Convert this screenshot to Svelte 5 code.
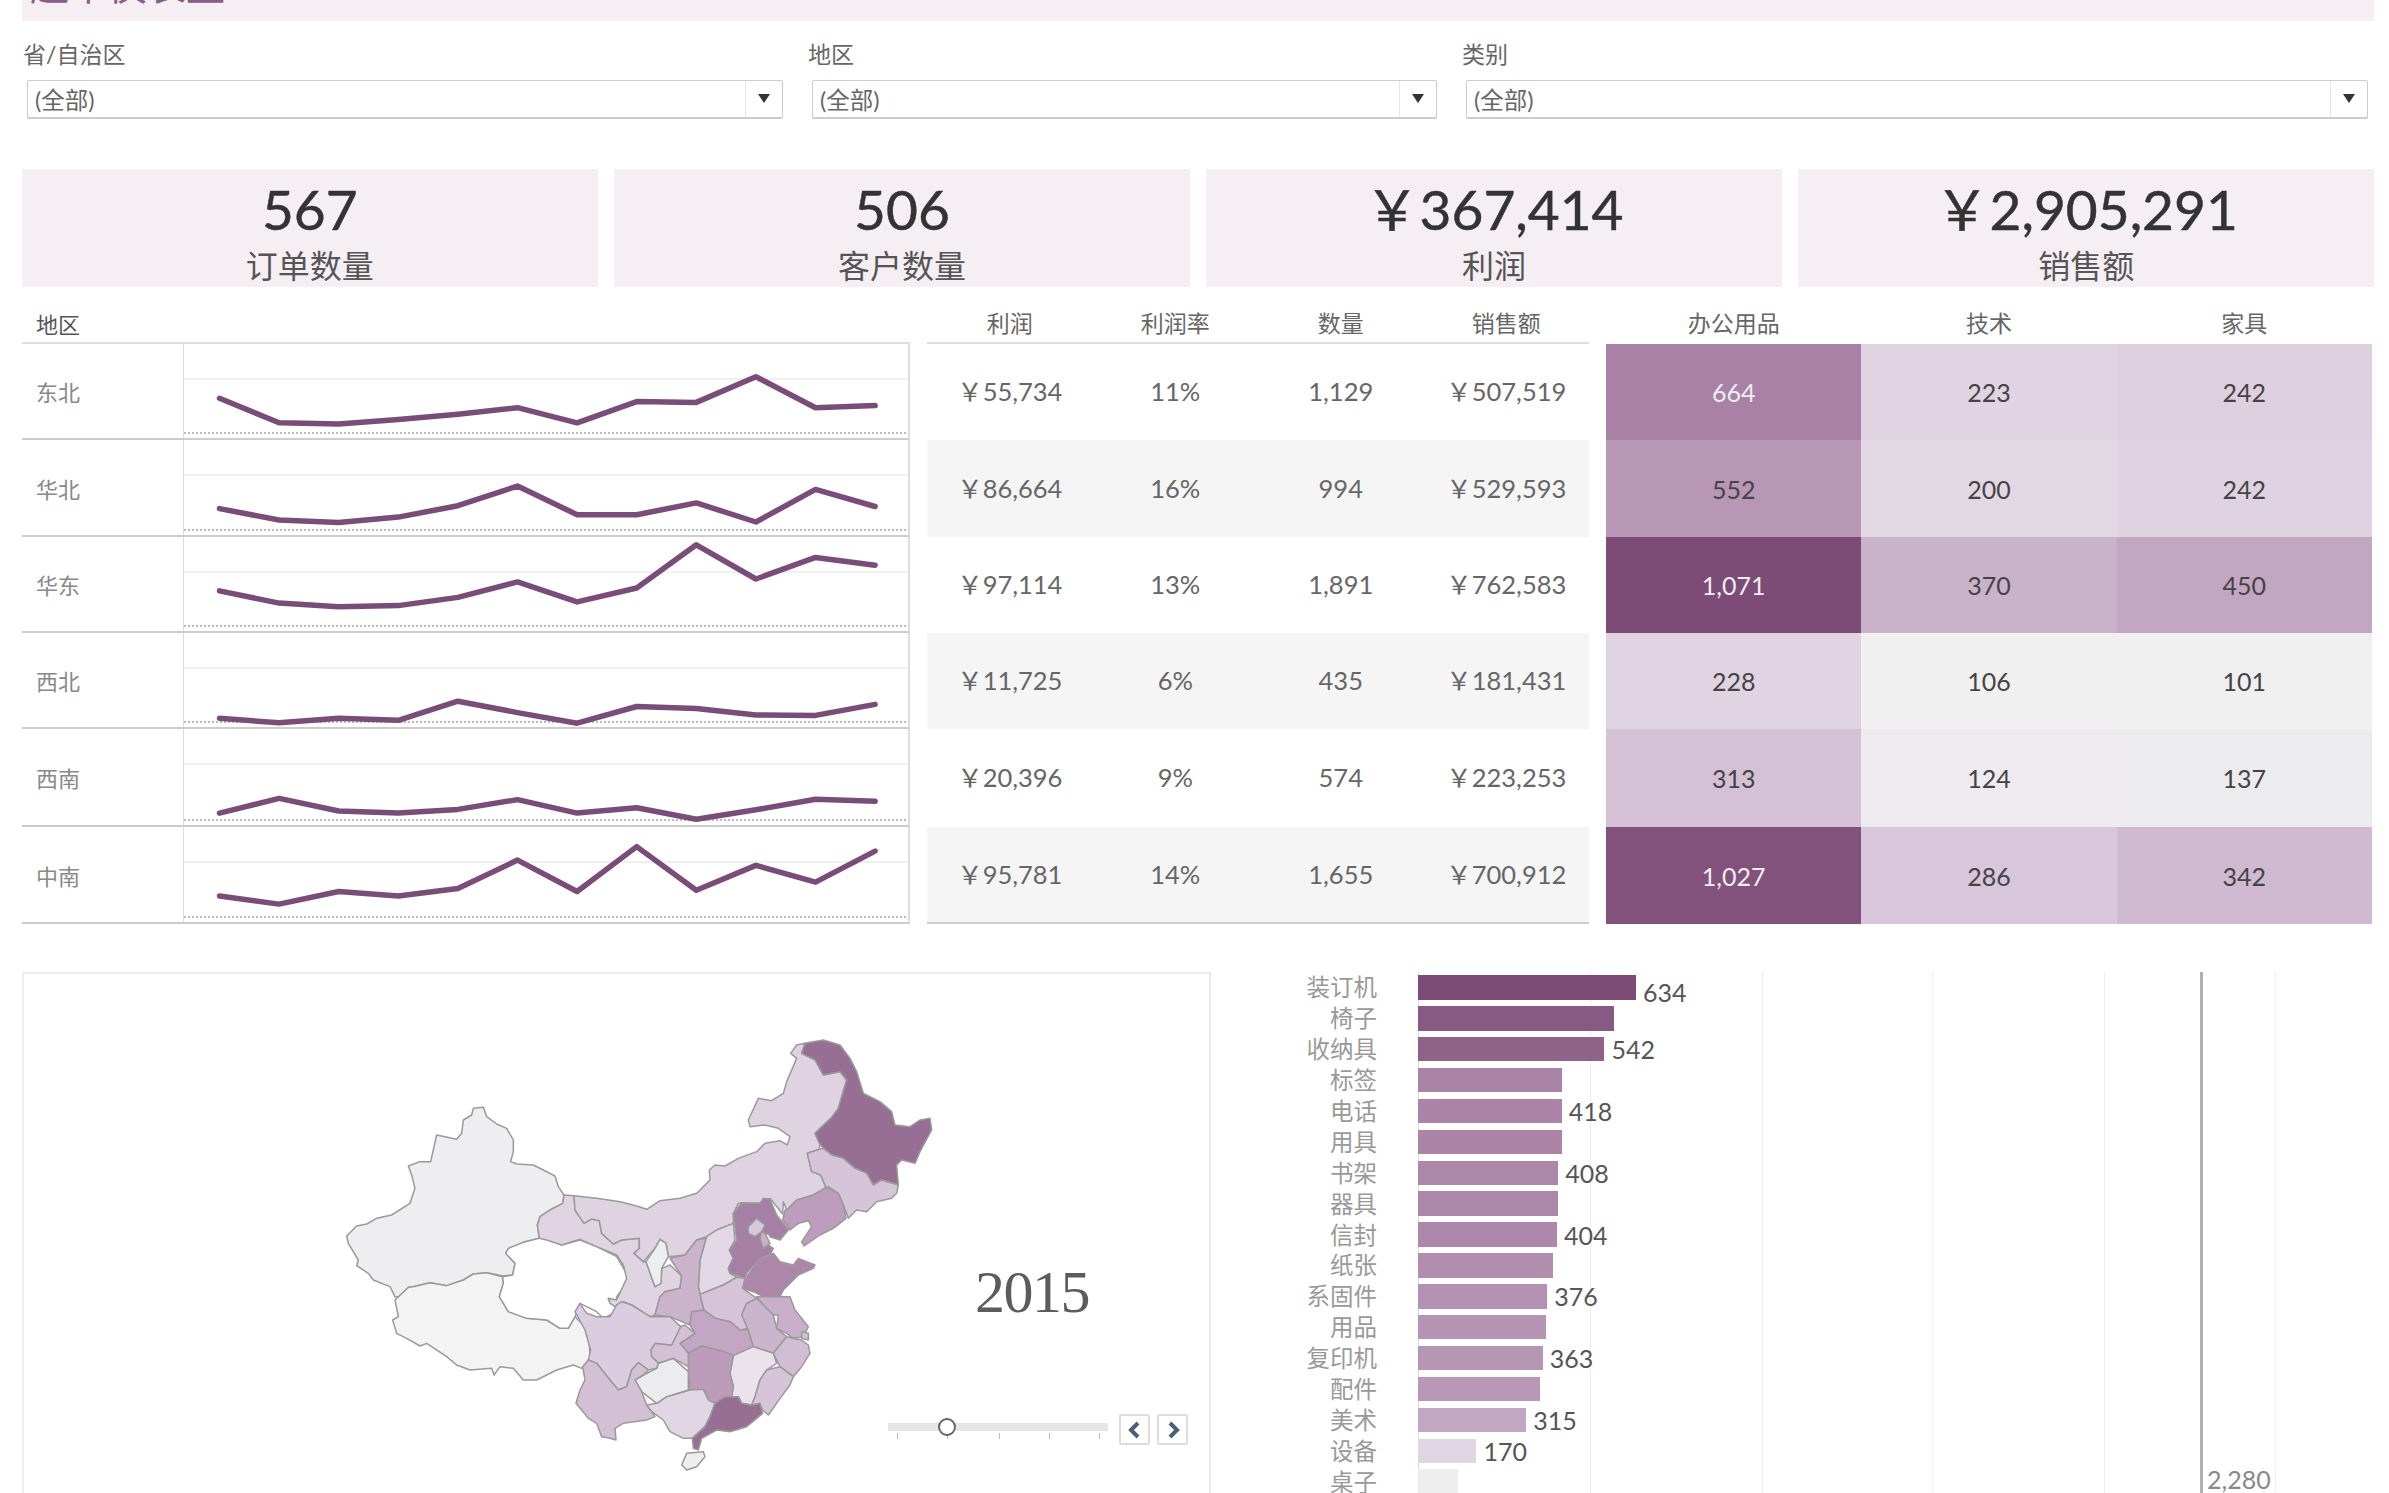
<script>
  const filters = [
    { label: '省/自治区', cls: 'f1' },
    { label: '地区', cls: 'f2' },
    { label: '类别', cls: 'f3' }
  ];

  const kpis = [
    { value: '567', label: '订单数量' },
    { value: '506', label: '客户数量' },
    { value: '￥367,414', label: '利润' },
    { value: '￥2,905,291', label: '销售额' }
  ];

  const rowHeights = [96, 97, 96, 96, 98, 97];

  // z = line height read off the reference crop, top = where that row starts in the same crop
  const regions = [
    { name: '东北', top: 107, z: [240, 300, 303, 292, 279, 263, 300, 248, 250, 187, 263, 258],
      cells: ['￥55,734', '11%', '1,129', '￥507,519'],
      heat: [[664, '#aa81a6', true], [223, '#e0d4e3'], [242, '#dfd0e0']] },
    { name: '华北', top: 342, z: [510, 538, 544, 531, 503, 455, 525, 525, 496, 543, 463, 505],
      cells: ['￥86,664', '16%', '994', '￥529,593'],
      heat: [[552, '#b896b6'], [200, '#e2d8e4'], [242, '#dfd2e1']] },
    { name: '华东', top: 581, z: [713, 743, 752, 749, 729, 691, 740, 706, 600, 684, 631, 650],
      cells: ['￥97,114', '13%', '1,891', '￥762,583'],
      heat: [['1,071', '#7c4c76', true], [370, '#cbb2cb'], [450, '#c2a6c2']] },
    { name: '西北', top: 816, z: [1025, 1036, 1025, 1030, 983, 1011, 1037, 996, 1001, 1017, 1018, 991],
      cells: ['￥11,725', '6%', '435', '￥181,431'],
      heat: [[228, '#e0d4e2'], [106, '#f0f0f0'], [101, '#f0f0f0']] },
    { name: '西南', top: 1052, z: [1258, 1222, 1253, 1258, 1249, 1225, 1258, 1245, 1273, 1250, 1224, 1229],
      cells: ['￥20,396', '9%', '574', '￥223,253'],
      heat: [[313, '#d4c1d6'], [124, '#eeeaef'], [137, '#ecebed']] },
    { name: '中南', top: 1292, z: [1461, 1481, 1450, 1461, 1443, 1373, 1450, 1340, 1447, 1386, 1427, 1351],
      cells: ['￥95,781', '14%', '1,655', '￥700,912'],
      heat: [['1,027', '#82527d', true], [286, '#d8c6da'], [342, '#d0bad2']] }
  ];

  function sparkline(r) {
    return r.z.map((z, i) => `${(35.5 + i * 59.6).toFixed(1)},${((z - r.top) / 2.45).toFixed(1)}`).join(' ');
  }

  const bars = [
    { name: '装订机', v: 634, color: '#7c4c76', show: true, nudge: true },
    { name: '椅子', v: 571, color: '#865a82' },
    { name: '收纳具', v: 542, color: '#8f6389', show: true },
    { name: '标签', v: 419, color: '#aa84a6' },
    { name: '电话', v: 418, color: '#ac84a9', show: true },
    { name: '用具', v: 418, color: '#ab84a8' },
    { name: '书架', v: 408, color: '#ad87a9', show: true },
    { name: '器具', v: 407, color: '#ad87a9' },
    { name: '信封', v: 404, color: '#ae88aa', show: true },
    { name: '纸张', v: 392, color: '#b18eae' },
    { name: '系固件', v: 376, color: '#b492b3', show: true },
    { name: '用品', v: 372, color: '#b594b4' },
    { name: '复印机', v: 363, color: '#b796b5', show: true },
    { name: '配件', v: 355, color: '#b998b7' },
    { name: '美术', v: 315, color: '#c4a7c3', show: true },
    { name: '设备', v: 170, color: '#e0d6e3', show: true },
    { name: '桌子', v: 116, color: '#eeeeee' }
  ];

  const gridLines = [172, 343.5, 514, 686, 857];
  const ticks = [9, 59, 111, 161, 211];

  // map shapes, traced at 3x from three crops of the reference, hence three offsets
  const mapLayers = [
    {
      tf: 'translate(340 1100) scale(.33333)',
      shapes: [
        ['#eeedef', '400,25 430,22 440,50 470,72 500,85 520,120 520,155 512,185 530,192 580,195 610,210 645,228 655,260 672,285 668,310 630,330 600,350 592,375 598,415 550,427 505,445 497,460 525,490 518,525 490,528 440,518 400,522 370,540 320,557 270,548 220,560 205,562 190,590 165,590 150,560 100,540 85,520 50,497 55,480 25,430 20,408 50,378 80,372 110,355 155,345 210,310 225,265 215,225 205,198 240,185 272,185 290,105 350,118 365,100 370,60 395,45'],
        ['#f3f3f4', '165,600 205,562 220,560 270,548 320,557 370,540 400,522 440,518 488,530 490,550 478,590 505,635 560,655 620,660 660,685 685,685 705,650 735,680 748,730 750,775 738,790 725,805 700,795 650,810 590,840 550,840 520,805 480,800 462,825 455,805 390,810 350,795 320,770 260,730 240,738 200,715 170,700 158,660 175,650'],
        ['#ffffff', '505,445 550,427 598,415 620,415 665,435 720,420 770,440 830,470 862,525 860,550 830,590 830,625 805,600 835,625 820,640 790,655 770,635 720,610 705,650 685,685 660,685 620,660 560,655 505,635 478,590 490,550 488,530 518,525 525,490 497,460']
      ]
    },
    {
      tf: 'translate(560 1190) scale(.33333)',
      shapes: [
        ['#e0d4e2', '12,15 42,17 45,60 72,100 95,87 118,92 125,130 160,162 185,150 238,145 238,175 222,190 250,215 258,215 285,290 303,280 305,235 330,225 365,258 360,295 315,305 300,320 285,375 270,380 215,345 190,335 175,355 150,340 145,325 170,330 200,265 190,225 170,195 110,170 60,148 5,165 -40,150 -62,145 -68,105 -60,80 -30,60 8,40'],
        ['#e0d3e1', '42,17 110,25 180,35 230,48 260,58 300,32 360,25 410,10 420,0 450,-30 448,-60 465,-75 495,-72 535,-95 590,-115 615,-140 660,-148 682,-135 690,-160 655,-185 615,-195 570,-190 565,-210 595,-275 635,-268 670,-290 680,-325 710,-395 692,-410 710,-435 735,-440 725,-410 765,-390 790,-345 840,-355 860,-330 845,-280 835,-245 815,-218 765,-170 780,-140 778,-122 742,-110 755,-55 782,-45 798,-8 760,15 710,30 680,60 670,35 668,72 630,25 600,40 535,40 520,70 520,100 470,120 440,140 410,150 375,195 325,200 318,160 300,148 285,175 250,215 222,190 238,175 238,145 185,150 160,162 125,130 118,92 95,87 72,100 45,60'],
        ['#e3d8e5', '440,140 470,120 520,100 525,150 508,180 520,205 505,235 510,250 530,262 490,285 420,313 415,290 420,210'],
        ['#eeedef', '300,148 318,160 325,200 305,235 303,280 285,290 258,215 285,175'],
        ['#cbb3cc', '438,145 420,210 415,290 420,313 432,360 395,365 390,405 330,380 285,375 300,320 315,305 360,295 365,258 330,205 375,195 410,150'],
        ['#d6c3d8', '420,313 490,285 530,262 555,265 548,295 590,325 560,340 545,375 565,415 540,420 510,395 465,385 432,360'],
        ['#a57fa4', '545,38 600,40 610,25 630,28 650,75 685,120 660,150 630,140 625,130 610,140 625,165 640,175 630,195 600,205 560,250 555,265 510,250 505,235 520,205 508,180 530,150 525,110 520,70'],
        ['#d8c6da', '565,110 590,85 615,105 605,125 585,140 565,130'],
        ['#c9b0c9', '605,125 615,130 630,160 610,175 600,145'],
        ['#ac87aa', '640,190 660,215 700,225 715,205 765,225 760,235 715,255 670,300 660,320 610,320 580,305 548,295 560,260 600,205'],
        ['#c3a6c3', '395,365 432,360 465,385 510,395 540,420 565,420 580,470 520,497 490,485 425,468 385,490 360,460 405,430 390,405'],
        ['#cbb5cc', '560,340 590,325 610,345 640,375 650,415 680,440 640,490 580,470 565,420 545,375'],
        ['#c9afca', '590,320 610,320 660,320 690,320 705,360 745,410 730,440 700,445 680,430 650,415 655,375 640,375 610,345'],
        ['#d3bfd5', '725,425 745,430 745,450 725,445'],
        ['#d2bed4', '680,440 700,445 725,450 745,465 750,490 725,530 700,560 660,530 640,490'],
        ['#ebe2ee', '520,497 580,470 640,490 650,520 620,540 600,570 585,620 575,645 545,640 535,620 515,620 520,590 510,550'],
        ['#d6c5d8', '660,530 700,560 690,585 660,625 625,675 608,660 600,640 575,645 585,620 600,570 620,540'],
        ['#bd9cbb', '385,490 425,468 490,485 520,497 510,550 520,590 515,620 495,620 465,640 445,630 430,598 390,600 385,550'],
        ['#e1d6e4', '290,640 320,620 390,600 430,598 445,630 465,640 450,680 435,710 397,745 370,745 330,725 310,690 275,665 260,645'],
        ['#976e94', '465,640 495,620 515,620 535,620 545,640 575,645 600,640 608,670 560,710 510,725 470,720 425,745 415,780 400,775 397,745 435,710 450,680'],
        ['#ecebee', '225,570 250,555 290,535 295,520 340,505 385,545 385,600 320,620 290,640 245,605'],
        ['#d3c0d5', '272,480 285,460 335,465 360,410 375,405 405,430 360,460 385,490 385,530 340,505 295,520 275,500'],
        ['#dccce0', '45,365 60,340 80,370 110,380 150,380 170,345 185,335 215,345 270,380 330,380 362,410 335,465 285,460 272,480 275,500 295,520 290,535 265,540 235,518 215,540 200,590 175,600 150,570 110,520 85,510 92,480 75,420'],
        ['#d3c0d5', '85,510 110,520 150,570 175,600 200,590 215,540 235,518 265,540 250,555 225,570 245,605 260,645 285,680 260,690 190,700 165,715 168,750 150,745 125,740 110,700 85,685 48,640 60,600 75,570 68,530'],
        ['#eeedef', '380,790 430,785 435,800 410,830 380,840 365,825']
      ]
    },
    {
      tf: 'translate(700 1030) scale(.33333)',
      shapes: [
        ['#976e94', '315,40 370,30 420,45 450,85 470,125 490,190 540,215 575,245 585,285 630,290 660,270 690,265 695,300 660,365 645,400 605,390 590,405 595,465 545,450 520,465 500,430 465,415 430,385 395,375 370,355 358,340 345,310 395,262 415,235 425,200 440,150 420,125 370,135 345,90 305,70'],
        ['#d6c4d8', '322,370 358,358 370,355 395,375 430,385 465,415 500,430 520,465 545,450 595,465 590,490 575,505 530,515 500,545 470,540 445,565 432,530 415,490 385,470 378,472 362,435 335,425'],
        ['#bd9cbd', '378,472 415,490 432,530 438,565 400,595 360,615 312,648 305,635 335,590 325,572 295,580 270,600 248,570 255,540 260,540 290,510 340,495']
      ]
    }
  ];
</script>

<div class="page">
  <div class="banner"><span class="title">超市仪表盘</span></div>

  <div class="filters">
    {#each filters as f}
      <div class="filter {f.cls}">
        <div class="filter-label">{f.label}</div>
        <div class="select">
          <span class="select-text">(全部)</span>
          <span class="select-arrow"></span>
        </div>
      </div>
    {/each}
  </div>

  <div class="kpis">
    {#each kpis as k}
      <div class="kpi">
        <div class="kpi-value">{k.value}</div>
        <div class="kpi-label">{k.label}</div>
      </div>
    {/each}
  </div>

  <div class="board">
    <div class="col spark-col">
      <div class="head head-left">地区</div>
      {#each regions as r, i}
        <div class="spark-row">
          <div class="region">{r.name}</div>
          <div class="spark">
            <svg viewBox="0 0 724 {rowHeights[i] - 2}" width="724" height={rowHeights[i] - 2}>
              <line x1="0" x2="724" y1="35" y2="35" class="grid" />
              <line x1="0" x2="724" y1={rowHeights[i] - 7} y2={rowHeights[i] - 7} class="zero" />
              <polyline points={sparkline(r)} class="trend" />
            </svg>
          </div>
        </div>
      {/each}
    </div>

    <div class="col mid-col">
      <div class="head-row">
        <span>利润</span><span>利润率</span><span>数量</span><span>销售额</span>
      </div>
      {#each regions as r, i}
        <div class="mid-row" class:band={i % 2 === 1} class:last={i === 5}>
          {#each r.cells as c}<span>{c}</span>{/each}
        </div>
      {/each}
    </div>

    <div class="col heat-col">
      <div class="head-row heat-head">
        <span>办公用品</span><span>技术</span><span>家具</span>
      </div>
      {#each regions as r}
        <div class="heat-row">
          {#each r.heat as h}
            <span class:light={h[2]} style="background:{h[1]}">{h[0]}</span>
          {/each}
        </div>
      {/each}
    </div>
  </div>

  <div class="lower">
    <div class="map-panel">
      <svg class="map" width="640" height="493" viewBox="320 1000 640 493">
        {#each mapLayers as layer}
          <g transform={layer.tf}>
            {#each layer.shapes as s}
              <polygon points={s[1]} fill={s[0]} />
            {/each}
          </g>
        {/each}
      </svg>

      <div class="year">2015</div>

      <div class="player">
        <div class="slider">
          <div class="track"></div>
          {#each ticks as t}
            <span class="tick" style="left:{t}px"></span>
          {/each}
          <span class="thumb"></span>
        </div>
        <div class="step">
          <svg width="20" height="20" viewBox="0 0 20 20"><path d="M13 3 L6 10 L13 17" /></svg>
        </div>
        <div class="step">
          <svg width="20" height="20" viewBox="0 0 20 20"><path d="M7 3 L14 10 L7 17" /></svg>
        </div>
      </div>
    </div>

    <div class="bars">
      {#each gridLines as g}
        <span class="vline" style="left:{g + 207}px"></span>
      {/each}
      <span class="axis"></span>
      <span class="ref"></span>
      <span class="ref-label">2,280</span>

      {#each bars as b}
        <div class="bar-row">
          <span class="bar-name">{b.name}</span>
          <div class="bar-cell">
            <span class="bar" style="width:{b.v * 0.344}px;background:{b.color}"></span>
            {#if b.show}
              <span class="bar-value" class:nudge={b.nudge}>{b.v}</span>
            {/if}
          </div>
        </div>
      {/each}
    </div>
  </div>
</div>

<style>
  :global(body) {
    margin: 0;
    background: #fff;
  }

  .page {
    --sans: Lato, "Noto Sans CJK SC", sans-serif;
    --rows: 57px 96px 97px 96px 96px 98px 97px;
    box-sizing: border-box;
    width: 2389px;
    height: 1493px;
    padding: 0 15px 0 22px;
    overflow: hidden;
    font-family: var(--sans);
    color: #555;
  }

  .banner {
    height: 21px;
    display: flex;
    align-items: flex-end;
    overflow: hidden;
    background: #f5eff4;
  }

  .title {
    margin: 0 0 16px 8px;
    font-size: 39px;
    line-height: 39px;
    color: #8a5c86;
    white-space: nowrap;
  }

  .filters {
    display: flex;
    padding-top: 18px;
  }

  .f1 { width: 786px; }
  .f2 { width: 654px; }
  .f3 { width: 912px; }

  .filter-label {
    height: 30px;
    line-height: 30px;
    font-size: 23px;
    color: #666;
  }

  .f1 .filter-label { padding-left: 1px; }

  .select {
    box-sizing: border-box;
    display: flex;
    align-items: stretch;
    height: 39px;
    margin: 11px 0 0 5px;
    border: 1px solid #ccc;
    border-bottom: 2px solid #ccc;
    border-radius: 2px;
    background: #fff;
  }

  .f1 .select { width: 756px; }
  .f2 .select { width: 625px; margin-left: 4px; }
  .f3 .select { width: 902px; margin-left: 4px; }

  .select-text {
    flex: 1;
    padding-left: 7px;
    line-height: 38px;
    font-size: 23.5px;
    color: #666;
  }

  .select-arrow {
    position: relative;
    width: 36px;
    border-left: 1px solid #e6e6e6;
  }

  .select-arrow::after {
    content: '';
    position: absolute;
    left: 12px;
    top: 13px;
    border-left: 6px solid transparent;
    border-right: 6px solid transparent;
    border-top: 9px solid #333;
  }

  .kpis {
    display: grid;
    grid-template-columns: repeat(4, 1fr);
    gap: 16.5px;
    margin-top: 50px;
  }

  .kpi {
    height: 118px;
    background: #f5eff4;
    text-align: center;
  }

  .kpi-value {
    height: 77px;
    padding-top: 9px;
    box-sizing: border-box;
    line-height: 62px;
    font-size: 55px;
    color: #333;
    -webkit-text-stroke: 0.5px #333;
  }

  .kpi-label {
    line-height: 40px;
    font-size: 32px;
    color: #555;
  }

  .board {
    display: grid;
    grid-template-columns: 888px 662px 766px;
    column-gap: 17px;
  }

  .col {
    display: grid;
    grid-template-rows: var(--rows);
  }

  .head {
    align-self: end;
    height: 32px;
    line-height: 30px;
    padding-left: 14px;
    font-size: 22px;
    color: #555;
  }

  .head-left {
    border-bottom: 2px solid #ddd;
  }

  .spark-row {
    box-sizing: border-box;
    display: flex;
    border-bottom: 2px solid #ccc;
    border-right: 2px solid #ddd;
  }

  .region {
    box-sizing: border-box;
    width: 161px;
    padding-left: 14px;
    align-self: center;
    font-size: 22px;
    color: #888;
  }

  .spark {
    flex: 1;
    border-left: 1px solid #ddd;
    overflow: hidden;
  }

  .spark svg {
    display: block;
  }

  .grid {
    stroke: #f0f0f0;
    stroke-width: 2;
  }

  .zero {
    stroke: #bbb;
    stroke-width: 2;
    stroke-dasharray: 2 2;
  }

  .trend {
    fill: none;
    stroke: #7a4d78;
    stroke-width: 5.5;
    stroke-linejoin: round;
    stroke-linecap: round;
  }

  .head-row {
    display: grid;
    grid-template-columns: repeat(4, 1fr);
    align-items: end;
    padding-bottom: 5px;
    text-align: center;
    font-size: 23px;
    line-height: 28px;
    color: #666;
  }

  .mid-col .head-row {
    border-bottom: 2px solid #ddd;
    box-sizing: border-box;
  }

  .heat-head {
    grid-template-columns: repeat(3, 1fr);
    padding-bottom: 7px;
  }

  .mid-row {
    display: grid;
    grid-template-columns: repeat(4, 1fr);
    align-items: center;
    text-align: center;
    font-size: 25.5px;
    line-height: 28px;
    color: #666;
  }

  .mid-row span {
    display: block;
    height: 28px;
    margin-top: -2px;
  }

  .mid-row.band {
    background: #f5f5f5;
  }

  .mid-row.last {
    border-bottom: 2px solid #ccc;
  }

  .heat-row {
    display: grid;
    grid-template-columns: repeat(3, 1fr);
    font-size: 25px;
    color: #444;
  }

  .heat-row span {
    display: flex;
    align-items: center;
    justify-content: center;
  }

  .heat-row .light {
    color: #eee;
  }

  .lower {
    display: grid;
    grid-template-columns: 1189px 1fr;
    margin-top: 48px;
    height: 521px;
  }

  .map-panel {
    position: relative;
    box-sizing: border-box;
    height: 521px;
    border-top: 2px solid #eee;
    border-left: 2px solid #eee;
    border-right: 2px solid #e8e8e8;
    overflow: hidden;
  }

  .map {
    display: block;
    margin: 26px 0 0 296px;
  }

  .map polygon {
    stroke: #9a9a9a;
    stroke-width: 4.5;
    stroke-linejoin: round;
  }

  .year {
    position: absolute;
    left: 951px;
    top: 288px;
    font-family: "Liberation Serif", serif;
    font-size: 60px;
    line-height: 60px;
    letter-spacing: -1.5px;
    color: #5c5c5c;
  }

  .player {
    position: absolute;
    left: 864px;
    top: 440px;
    display: flex;
    align-items: flex-start;
    gap: 7px;
  }

  .slider {
    position: relative;
    width: 220px;
    height: 31px;
    margin-right: 4px;
  }

  .track {
    position: absolute;
    left: 0;
    right: 0;
    top: 9px;
    height: 8px;
    background: #e6e6e6;
  }

  .tick {
    position: absolute;
    top: 19px;
    width: 1px;
    height: 6px;
    background: #bbb;
  }

  .thumb {
    position: absolute;
    left: 50px;
    top: 4px;
    box-sizing: border-box;
    width: 18px;
    height: 18px;
    border: 2px solid #666;
    border-radius: 50%;
    background: #fff;
  }

  .step {
    box-sizing: border-box;
    display: flex;
    align-items: center;
    justify-content: center;
    width: 31px;
    height: 31px;
    border: 2px solid #ddd;
    border-radius: 2px;
  }

  .step path {
    fill: none;
    stroke: #4a5f7a;
    stroke-width: 4;
  }

  .bars {
    position: relative;
    display: grid;
    grid-auto-rows: 30.9px;
    padding-top: 0;
  }

  .vline,
  .axis,
  .ref {
    position: absolute;
    top: 0;
    bottom: 0;
    width: 1px;
    background: #eee;
  }

  .axis {
    left: 207px;
    background: #ddd;
  }

  .ref {
    left: 989px;
    width: 3px;
    background: #b0b0b0;
  }

  .ref-label {
    position: absolute;
    left: 996px;
    top: 492px;
    font-size: 25px;
    line-height: 30px;
    color: #888;
  }

  .bar-row {
    position: relative;
    display: grid;
    grid-template-columns: 166px 1fr;
    column-gap: 41px;
    align-items: center;
  }

  .bar-name {
    text-align: right;
    font-size: 23.5px;
    line-height: 30px;
    color: #999;
  }

  .bar-cell {
    display: flex;
    align-items: center;
    gap: 7px;
  }

  .bar {
    height: 24.5px;
  }

  .bar-value {
    font-size: 25px;
    line-height: 24px;
    color: #555;
  }

  .bar-value.nudge {
    transform: translateY(5px);
  }
</style>
